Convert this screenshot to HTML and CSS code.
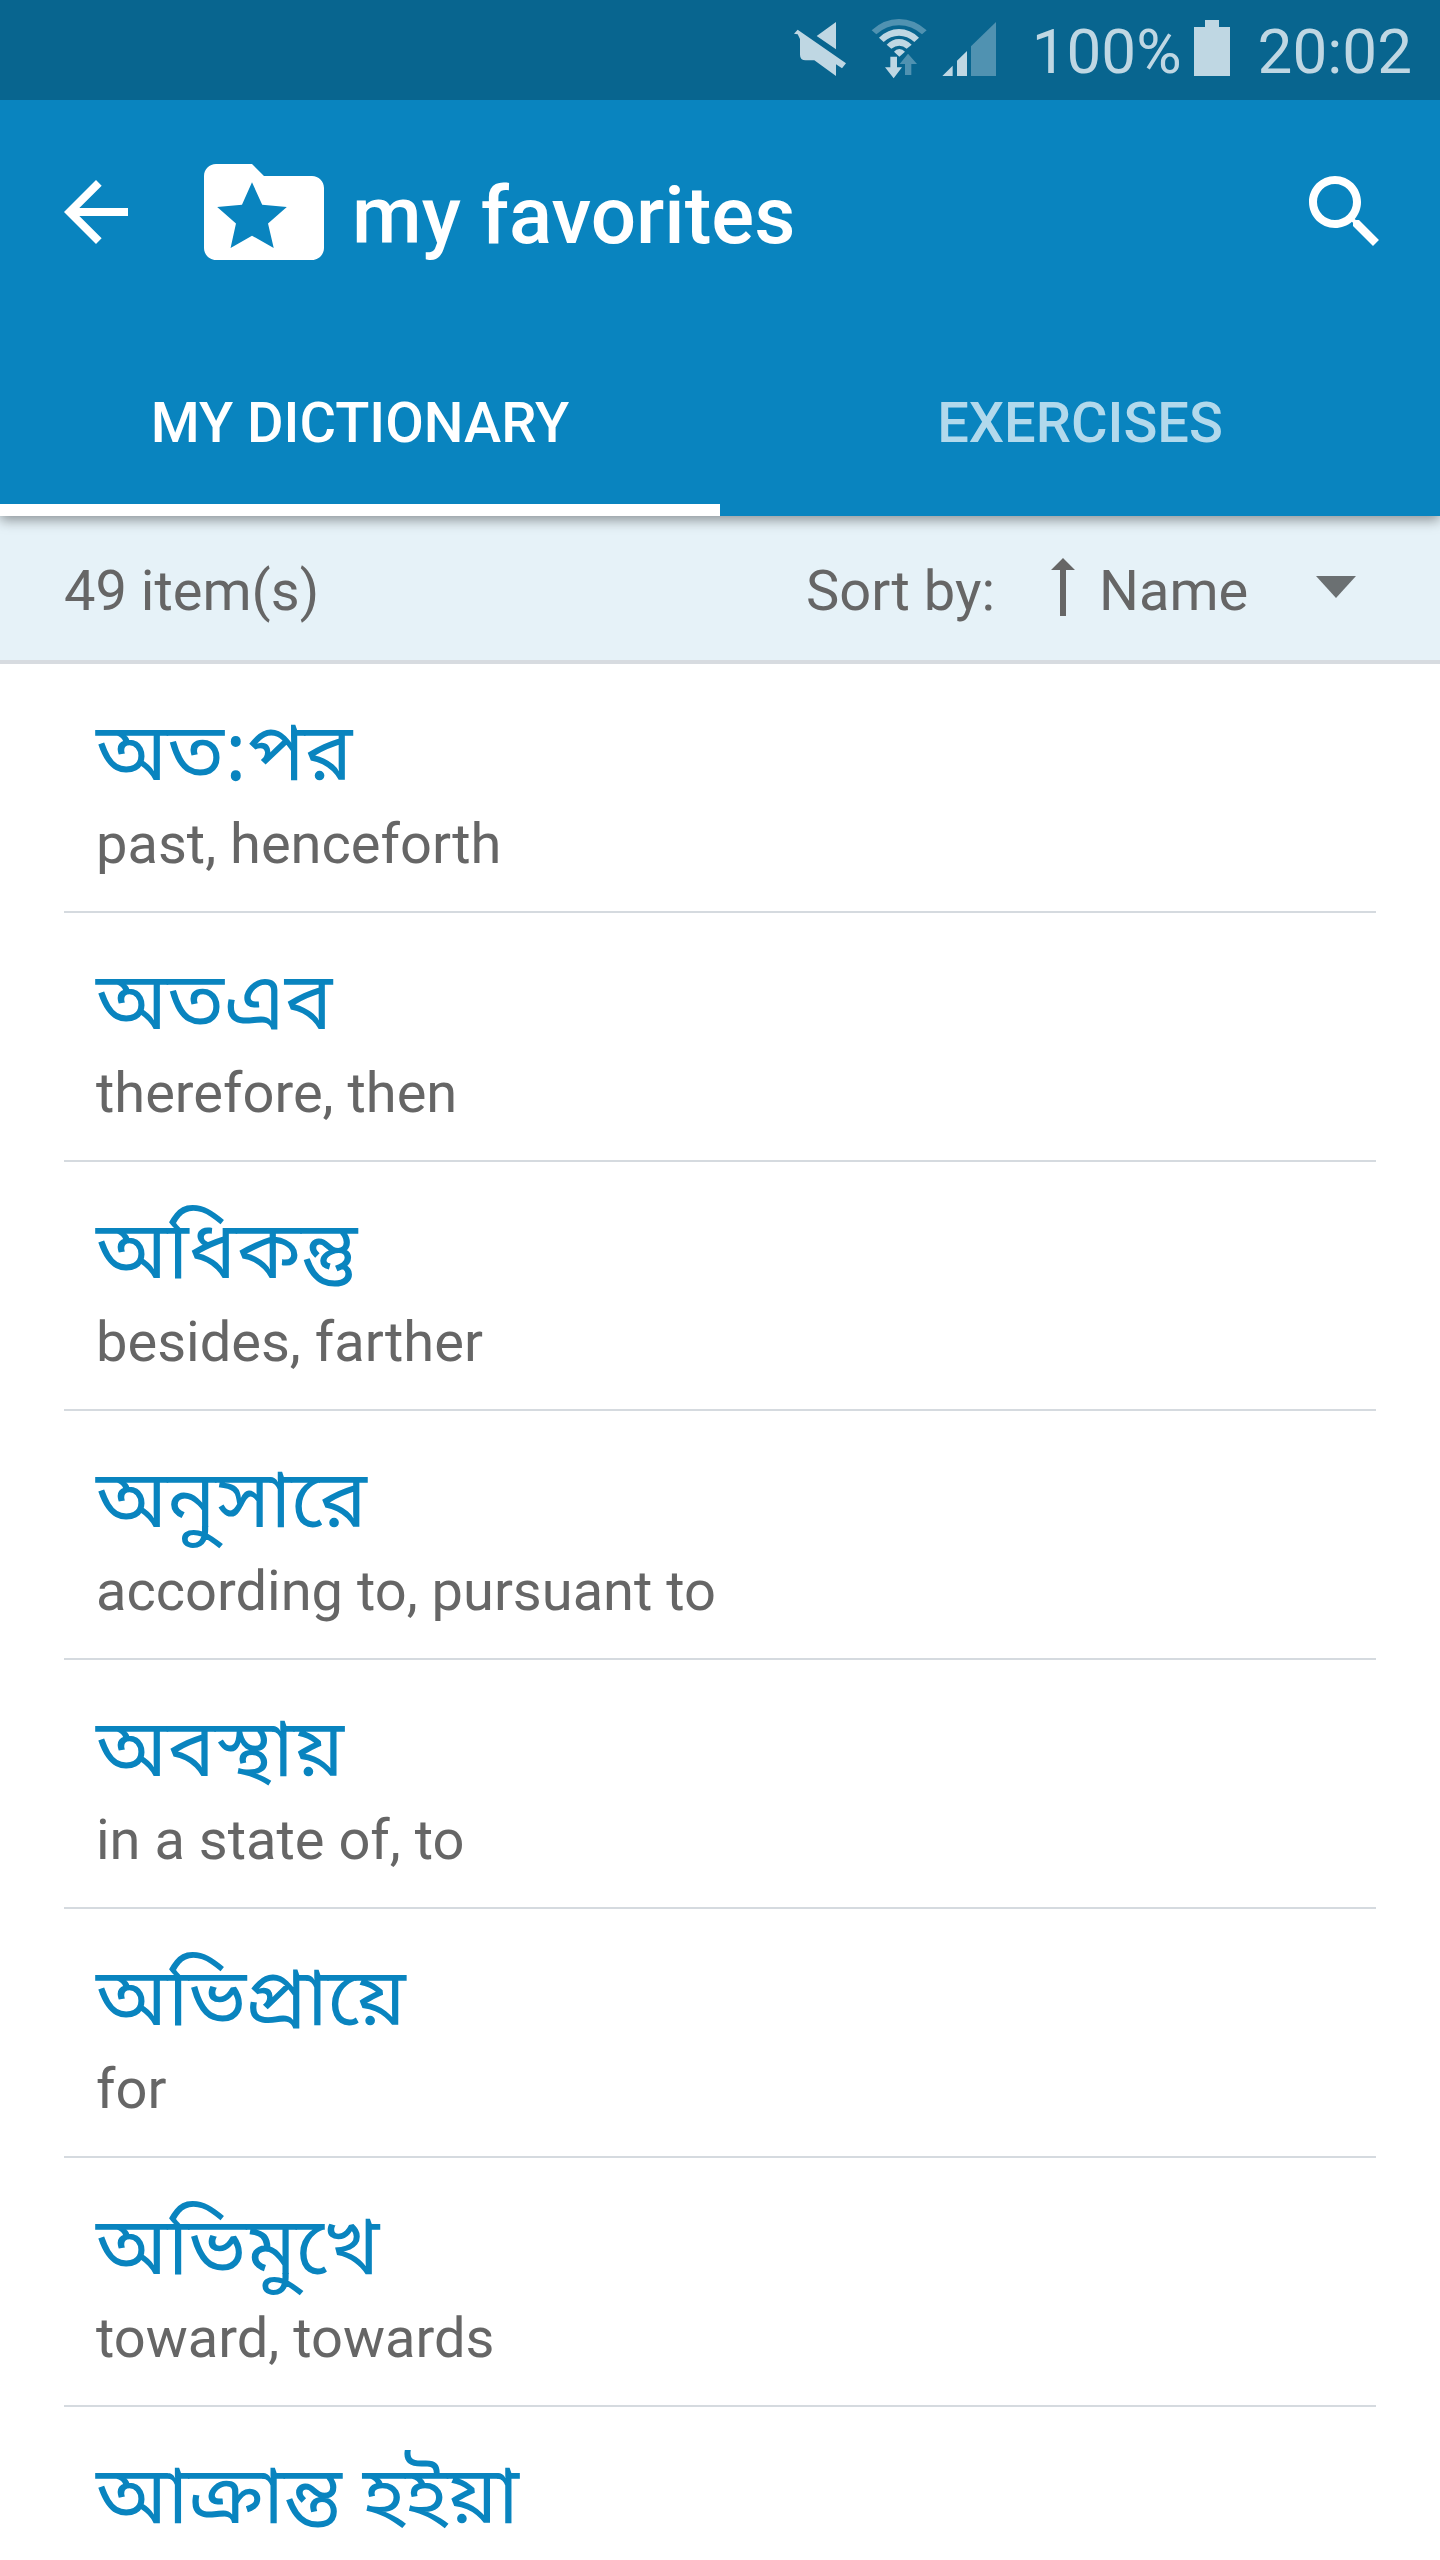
FILE: index.html
```html
<!DOCTYPE html>
<html lang="en">
<head>
<meta charset="utf-8">
<meta name="viewport" content="width=device-width, initial-scale=1">
<title>my favorites</title>
<link rel="stylesheet" href="styles.css">
</head>
<body>
<header class="top">
  <div class="status">
    <svg class="mute" viewBox="36 0 162 300" aria-hidden="true"><path d="M107 108L165 66v82zM57 117L50 103 39 101 50 89l145 101-12 15-18-12v35l-65-47H74q-17 0-17-17z"/></svg>
    <svg class="wifi" viewBox="270 0 168 300" aria-hidden="true">
      <path class="dim" d="M272 91Q308 57 354 57t83 34l-14 12Q392 76 354 76t-68 27zM381 161l27 31h-17v33h-19v-33h-16z"/>
      <path d="M294 113Q321 87 354 87t60 26l-14 13Q379 107 354 107t-46 19zM317 134Q333 117 354 117t38 17l-15 12Q367 137 355 137t-24 9zM339 155Q345 147 355 147t17 8l-17 15zM328 170h20v32h15l-25 33-26-33h16z"/>
    </svg>
    <svg class="signal" viewBox="483 0 162 300" aria-hidden="true"><path class="dim" d="M570 139l75-73v162h-75z"/><path d="M484 228l31-31v31zM528 182l30-29v75h-30z"/></svg>
    <span class="percent">100%</span>
    <svg class="battery" viewBox="0 0 36 100" aria-hidden="true"><path d="M0 27h11v-7h14v7h11v49H0z"/></svg>
    <time>20:02</time>
  </div>
  <div class="bar">
    <button class="icon-button" type="button" aria-label="Back"><svg viewBox="0 0 24 24"><path d="M20 11H7.83l5.59-5.59L12 4l-8 8 8 8 1.41-1.41L7.83 13H20v-2z"/></svg></button>
    <svg class="folder" viewBox="0 0 24 24" aria-hidden="true"><path fill-rule="evenodd" d="M10 4H4c-1.100 0-2 .9-2 2v12c0 1.100.9 2 2 2h16c1.100 0 2-.9 2-2V8c0-1.100-.9-2-2-2h-8zM10 7.050l1.700 3.730 4.100.4-3.130 2.720.95 4.100L10 15.950 6.430 18l.9-4.100L4.200 11.180l4.130-.4z"/></svg>
    <h1 class="title">my favorites</h1>
    <button class="icon-button" type="button" aria-label="Search"><svg viewBox="0 0 24 24"><path d="M15.500 14h-.79l-.28-.27C15.410 12.590 16 11.110 16 9.500 16 5.910 13.090 3 9.500 3S3 5.910 3 9.500 5.910 16 9.500 16c1.610 0 3.090-.59 4.230-1.570l.27.28v.79l5 4.990L20.490 19l-4.990-5zm-6 0C7.010 14 5 11.990 5 9.500S7.010 5 9.500 5 14 7.010 14 9.500 11.990 14 9.500 14z"/></svg></button>
  </div>
  <nav class="tabs">
    <a class="tab active" href="#dictionary">MY DICTIONARY</a>
    <a class="tab" href="#exercises">EXERCISES</a>
  </nav>
</header>
<section class="sortbar">
  <span class="count">49 item(s)</span>
  <label for="sort">Sort by:</label>
  <svg class="direction" viewBox="0 0 24 58" aria-hidden="true"><path d="M12 0l12 12H15v46H9V12H0z"/></svg>
  <select id="sort" class="sort"><option>Name</option></select>
  <svg class="caret" viewBox="0 0 40 22" aria-hidden="true"><path d="M0 0h40L20 22z"/></svg>
</section>
<main class="list" id="dictionary">
  <article class="entry"><h2 class="word" lang="bn">অত:পর</h2><p class="meaning">past, henceforth</p></article>
  <article class="entry"><h2 class="word" lang="bn">অতএব</h2><p class="meaning">therefore, then</p></article>
  <article class="entry"><h2 class="word" lang="bn">অধিকন্তু</h2><p class="meaning">besides, farther</p></article>
  <article class="entry"><h2 class="word" lang="bn">অনুসারে</h2><p class="meaning">according to, pursuant to</p></article>
  <article class="entry"><h2 class="word" lang="bn">অবস্থায়</h2><p class="meaning">in a state of, to</p></article>
  <article class="entry"><h2 class="word" lang="bn">অভিপ্রায়ে</h2><p class="meaning">for</p></article>
  <article class="entry"><h2 class="word" lang="bn">অভিমুখে</h2><p class="meaning">toward, towards</p></article>
  <article class="entry"><h2 class="word" lang="bn">আক্রান্ত হইয়া</h2></article>
</main>
</body>
</html>
```
FILE: styles.css
```css
* { box-sizing: border-box; }
body {
  margin: 0;
  height: 100vh;
  display: flex;
  flex-direction: column;
  background: #fff;
  color: #666;
  font-family: Roboto, "Noto Sans", sans-serif;
  font-size: 56px;
  line-height: 64px;
}
svg { display: block; flex: none; fill: currentColor; }
.top {
  flex: none;
  position: relative;
  background: #0984bf;
  color: #fff;
  box-shadow: 0 4px 12px rgba(0, 0, 0, .4);
}
.status {
  display: flex;
  justify-content: flex-end;
  align-items: center;
  height: 100px;
  padding-right: 28px;
  background: #08658f;
  color: #bfd7e3;
  font-size: 62px;
}
.status span, .status time { padding-top: 4px; }
.status svg { height: 100px; }
.dim { opacity: .4; }
.mute { width: 54px; margin-right: 24px; }
.wifi { width: 56px; margin-right: 15px; }
.signal { width: 54px; margin-right: 36px; }
.battery { width: 36px; margin: 0 28px 0 12px; }
.bar {
  display: flex;
  align-items: center;
  height: 224px;
  padding: 0 47px 0 48px;
}
.icon-button {
  flex: none;
  width: 96px;
  height: 96px;
  padding: 0;
  border: 0;
  background: none;
  color: inherit;
}
.folder { width: 144px; height: 144px; margin: 0 16px 0 48px; }
.title {
  flex: 1;
  margin: 0;
  padding-top: 8px;
  font-size: 80px;
  line-height: 96px;
  font-weight: 500;
}
.tabs { display: flex; }
.tab {
  flex: 1;
  height: 192px;
  padding-top: 67px;
  border-bottom: 12px solid transparent;
  color: #b2d9ec;
  font-weight: 500;
  text-align: center;
  text-decoration: none;
}
.tab.active { color: #fff; border-color: #fff; }
.sortbar {
  flex: none;
  display: flex;
  align-items: center;
  height: 148px;
  padding: 6px 84px 0 64px;
  background: #e6f2f8;
  border-bottom: 4px solid #d7dbe0;
}
.count { flex: 1; }
.direction { width: 24px; height: 58px; margin: 0 24px 8px 56px; }
.sort {
  appearance: none;
  width: 208px;
  height: 64px;
  margin: 0 9px 0 0;
  padding: 0;
  border: 0;
  background: none;
  color: inherit;
  font: inherit;
}
.caret { width: 40px; height: 22px; margin-bottom: 8px; color: #6b7072; }
.list {
  flex: 1;
  min-height: 0;
  overflow-y: auto;
  scrollbar-width: none;
}
.entry {
  height: 249px;
  margin: 0 64px;
  padding: 44px 32px 0;
  border-bottom: 2px solid #d5dadf;
}
.word {
  margin: 0;
  color: #0984bf;
  font-family: "Noto Sans Bengali UI", "Noto Sans Bengali", "Noto Sans", sans-serif;
  font-size: 80px;
  line-height: 104px;
  font-weight: 400;
}
.meaning { margin: 0; }
```
